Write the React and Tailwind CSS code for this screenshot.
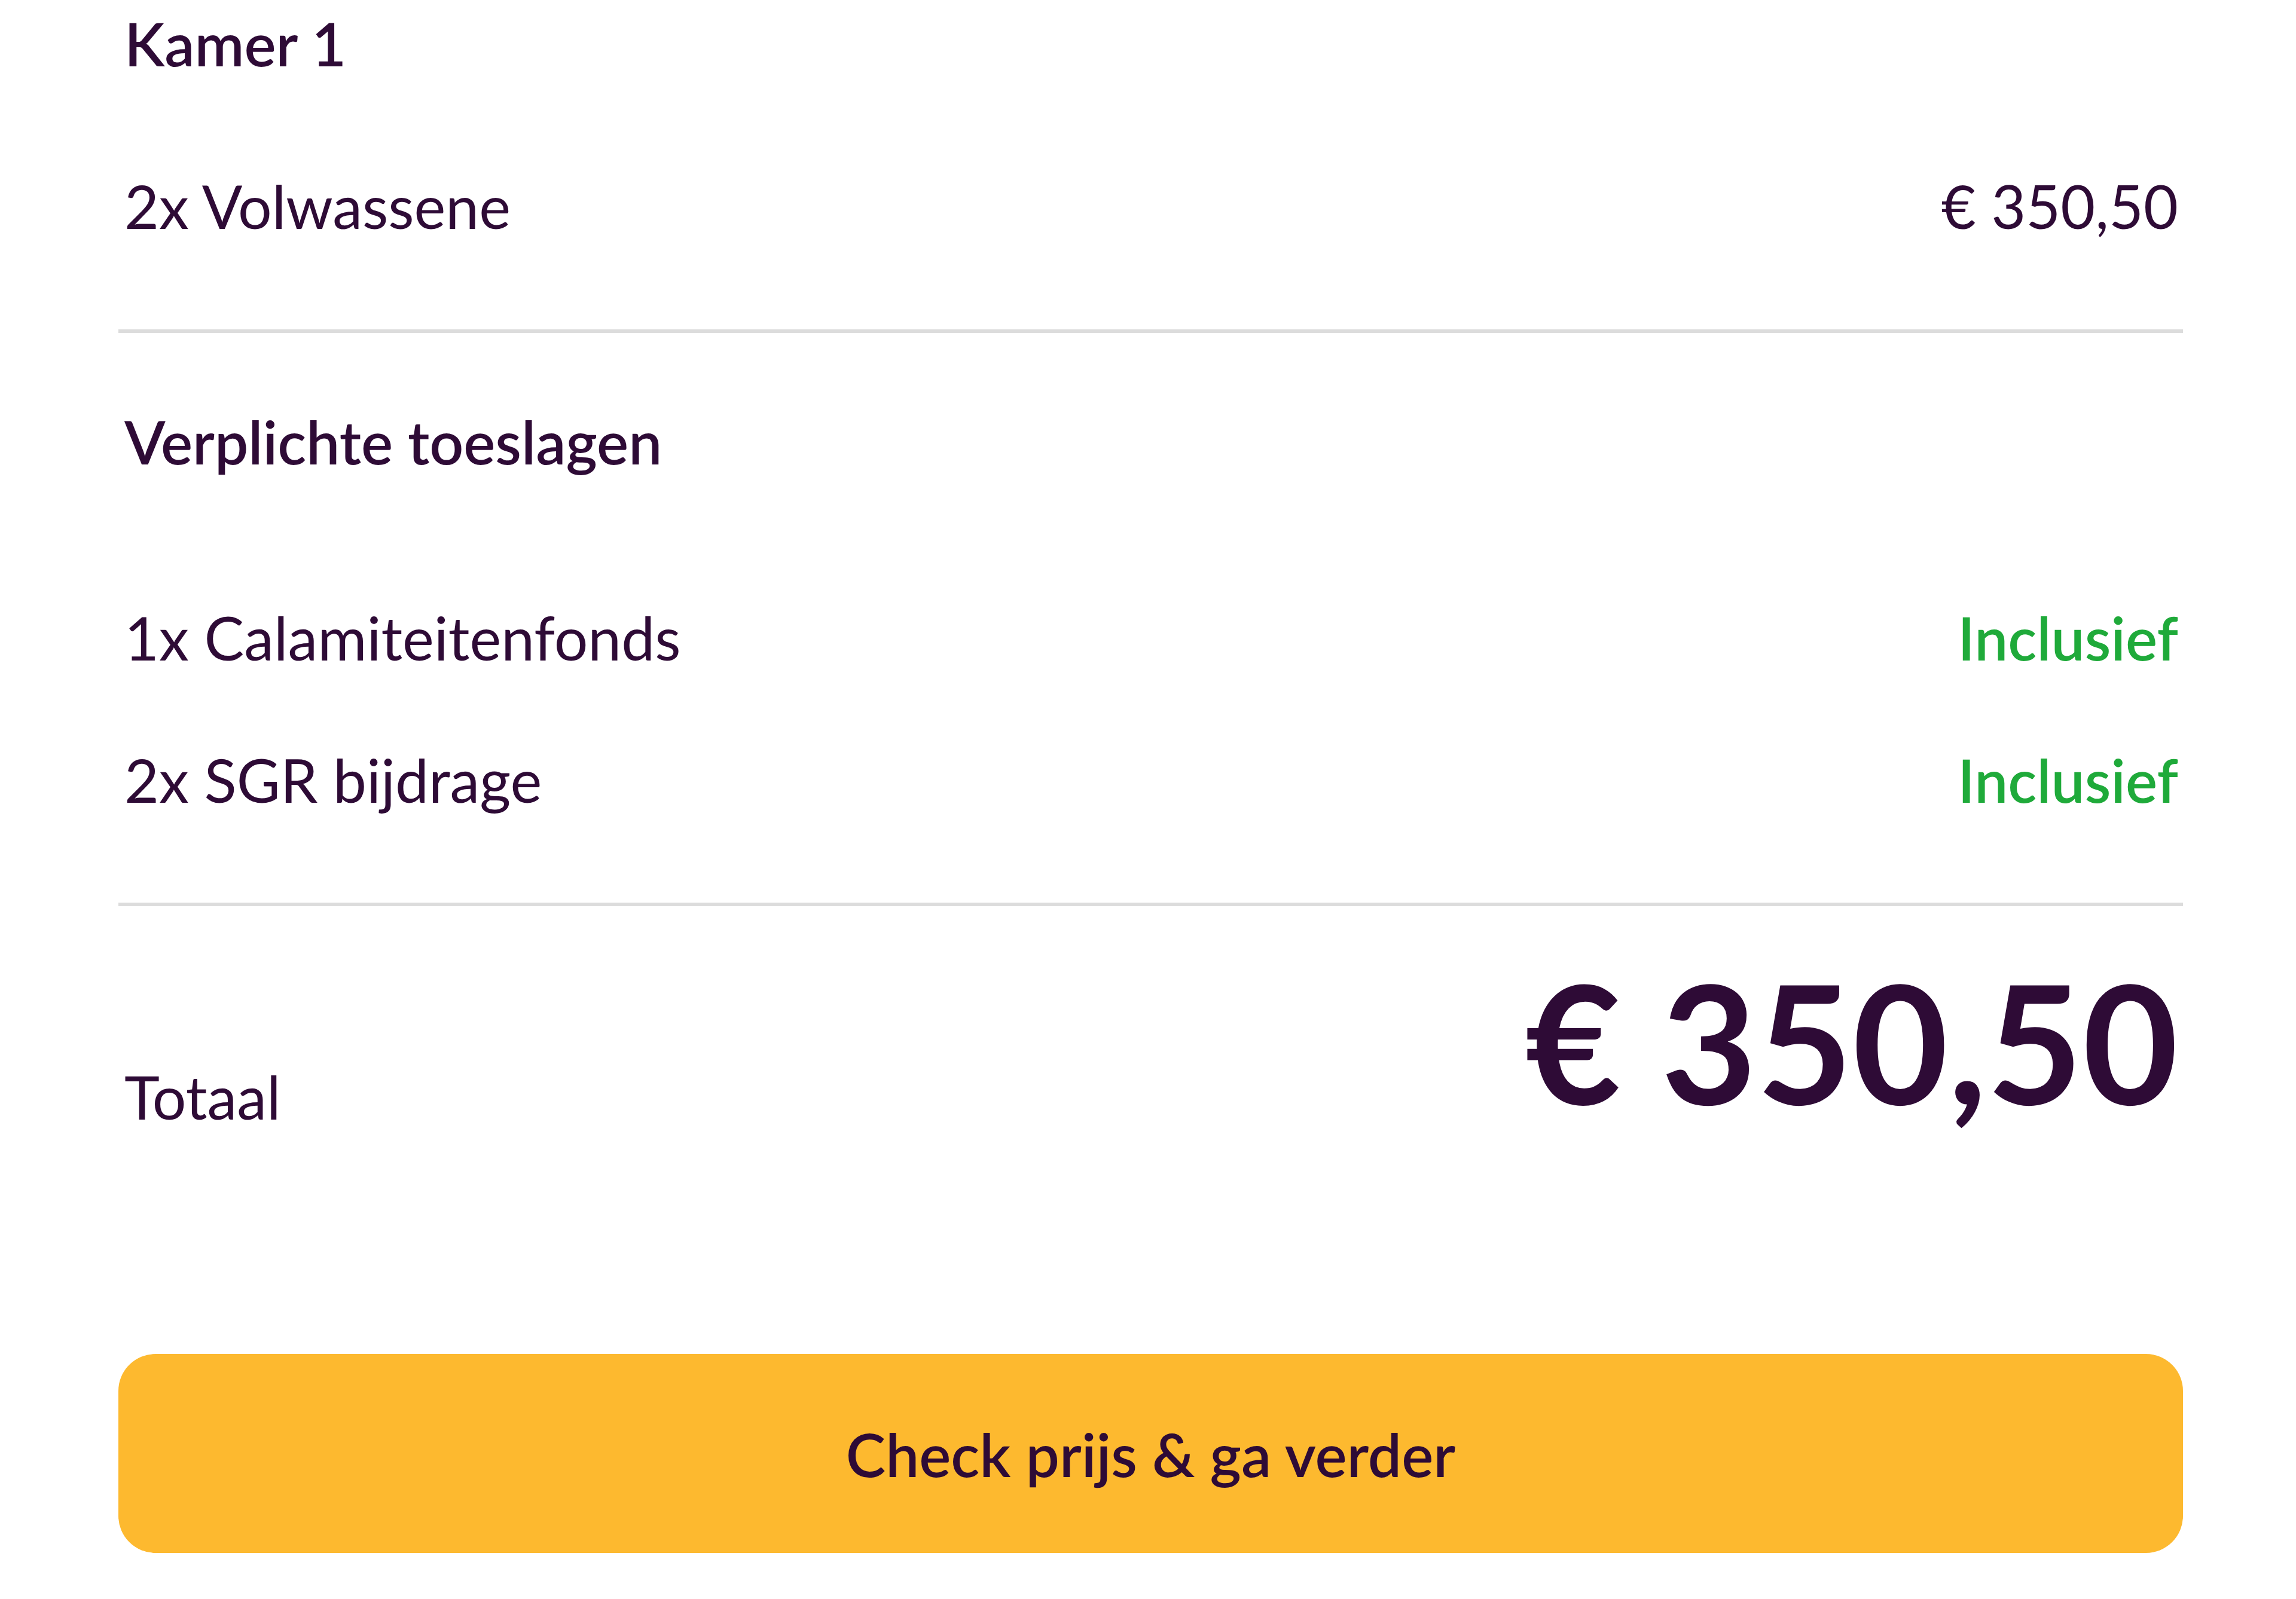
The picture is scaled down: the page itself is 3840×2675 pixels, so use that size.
const rows = [
  { label: "1x Calamiteitenfonds", value: "Inclusief" },
  { label: "2x SGR bijdrage", value: "Inclusief" },
];

function Divider() {
  return <div className="h-[6px] w-full bg-[#dcdcdc]" />;
}

export default function App() {
  return (
    <div className="min-h-screen bg-white font-['Lato',sans-serif] text-[#2e0b36]">
      <div className="pl-[198px] pr-[189px] pt-[12px]">
        {/* Kamer */}
        <h2 className="pl-[10px] text-[100px] leading-[120px] font-semibold">Kamer 1</h2>
        <div className="mt-[152px] flex items-start justify-between pl-[10px] pr-[8px] text-[100px] leading-[120px]">
          <span>2x Volwassene</span>
          <span>€ 350,50</span>
        </div>
        <div className="mt-[147px]">
          <Divider />
        </div>

        {/* Toeslagen */}
        <h3 className="mt-[121px] pl-[10px] text-[100px] leading-[120px] font-semibold">
          Verplichte toeslagen
        </h3>
        <div className="mt-[208px] flex flex-col gap-[118px] pl-[10px] pr-[8px]">
          {rows.map((r) => (
            <div key={r.label} className="flex justify-between text-[100px] leading-[120px]">
              <span>{r.label}</span>
              <span className="font-semibold text-[#1faa3a]">{r.value}</span>
            </div>
          ))}
        </div>
        <div className="mt-[146px]">
          <Divider />
        </div>

        {/* Totaal */}
        <div className="mt-[88px] flex items-end justify-between pl-[10px] pr-[8px]">
          <span className="text-[100px] leading-[120px]">Totaal</span>
          <span className="mb-[14px] text-[276px] leading-[276px] font-bold">€ 350,50</span>
        </div>

        <button className="mt-[371px] flex h-[333px] w-full items-center justify-center rounded-[62px] bg-[#fdb92f] text-[100px] leading-[120px] font-semibold text-[#2e0b36]">
          Check prijs &amp; ga verder
        </button>
      </div>
    </div>
  );
}
